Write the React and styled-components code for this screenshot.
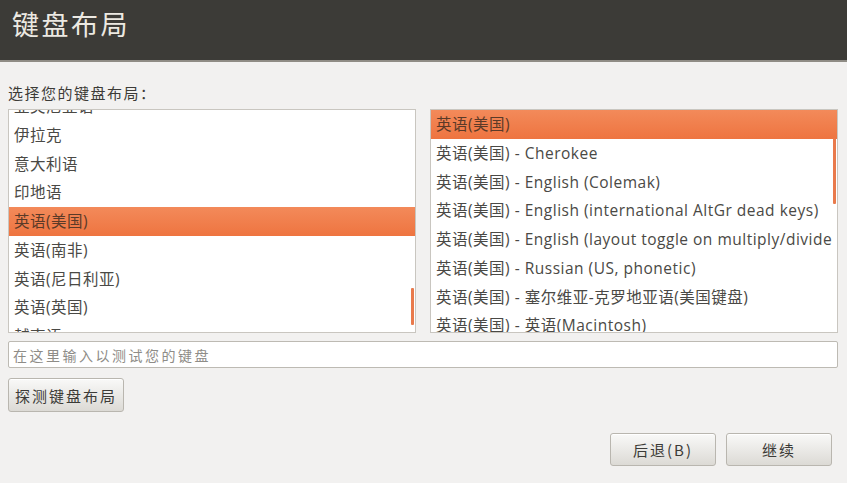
import { useLayoutEffect, useRef } from "react";
import styled, { createGlobalStyle } from "styled-components";

const GlobalStyle = createGlobalStyle`
  html, body {
    margin: 0;
    padding: 0;
    background: #f2f1f0;
  }
  body {
    font-family: "Open Sans", "Noto Sans CJK SC", sans-serif;
    color: #3c3b37;
  }
`;

const ROW = 28.75;

const leftItems = [
  "亚美尼亚语",
  "伊拉克",
  "意大利语",
  "印地语",
  "英语(美国)",
  "英语(南非)",
  "英语(尼日利亚)",
  "英语(英国)",
  "越南语",
];

const rightItems = [
  "英语(美国)",
  "英语(美国) - Cherokee",
  "英语(美国) - English (Colemak)",
  "英语(美国) - English (international AltGr dead keys)",
  "英语(美国) - English (layout toggle on multiply/divide key)",
  "英语(美国) - Russian (US, phonetic)",
  "英语(美国) - 塞尔维亚-克罗地亚语(美国键盘)",
  "英语(美国) - 英语(Macintosh)",
  "英语(美国) - 英语(international with dead keys)",
];

const Page = styled.div`
  width: 847px;
  height: 483px;
  display: flex;
  flex-direction: column;
  overflow: hidden;
`;

const Header = styled.header`
  height: 60px;
  background: #3c3b37;
  border-bottom: 2px solid #8f8c85;
  display: flex;
  align-items: center;
  padding: 0 12px;
  box-sizing: content-box;
`;

const Title = styled.h1`
  margin: 0 0 14px;
  font-family: "Noto Sans CJK SC", sans-serif;
  font-weight: 400;
  font-size: 27px;
  letter-spacing: 2.5px;
  color: #ece9e2;
`;

const Body = styled.main`
  display: flex;
  flex-direction: column;
  padding: 0 9px 0 8px;
`;

const Label = styled.div`
  margin: 21px 0 6px;
  height: 20px;
  line-height: 20px;
  font-family: "Noto Sans CJK SC", sans-serif;
  font-size: 15px;
  letter-spacing: 1.5px;
  color: #3c3b37;
`;

const Lists = styled.div`
  display: flex;
  gap: 14px;
`;

const ListFrame = styled.div`
  position: relative;
  flex: 1 1 0;
  min-width: 0;
  height: 224px;
  box-sizing: border-box;
  border: 1px solid #c9c6c0;
  background: #fff;
`;

const Scroller = styled.ul`
  list-style: none;
  margin: 0;
  padding: 0;
  height: 100%;
  overflow: hidden;
`;

const Row = styled.li`
  height: ${ROW}px;
  line-height: ${ROW}px;
  padding: 0 6px 0 5px;
  white-space: nowrap;
  overflow: hidden;
  font-family: "Open Sans", "Noto Sans CJK SC", sans-serif;
  font-size: 15.5px;
  letter-spacing: 0.5px;
  color: ${(p) => (p.$selected ? "#5b3a28" : "#4a4945")};
  background: ${(p) =>
    p.$selected ? "linear-gradient(#f38a5a, #ee7440)" : "transparent"};
`;

const Thumb = styled.div`
  position: absolute;
  right: 1px;
  width: 3px;
  border-radius: 1px;
  background: #e97a4c;
`;

const TestInput = styled.input`
  margin-top: 8px;
  height: 27px;
  box-sizing: border-box;
  border: 1px solid #bdbab3;
  border-radius: 2px;
  background: #fff;
  padding: 0 4px;
  font-family: "Noto Sans CJK SC", sans-serif;
  font-size: 14px;
  letter-spacing: 2.5px;
  color: #3c3b37;
  outline: none;
  &::placeholder {
    color: #8e8c87;
  }
`;

const Button = styled.button`
  height: ${(p) => p.$h || 33}px;
  width: ${(p) => p.$w}px;
  padding: 0;
  box-sizing: border-box;
  border: 1px solid #b9b6af;
  border-radius: 3px;
  background: linear-gradient(#f9f9f8, #dcdad5);
  box-shadow: inset 0 1px 0 #fff;
  font-family: "Noto Sans CJK SC", sans-serif;
  font-size: 15px;
  letter-spacing: 2px;
  color: #3c3b37;
`;

const DetectRow = styled.div`
  margin-top: 10px;
`;

const Footer = styled.div`
  margin-top: 21px;
  display: flex;
  justify-content: flex-end;
  gap: 10px;
  padding-right: 6px;
`;

const List = ({ items, selected, offset, thumbTop, thumbHeight }) => {
  const ref = useRef(null);
  useLayoutEffect(() => {
    if (ref.current) ref.current.scrollTop = offset;
  }, [offset]);
  return (
    <ListFrame>
      <Scroller ref={ref}>
        {items.map((item, i) => (
          <Row key={item} $selected={i === selected}>
            {item}
          </Row>
        ))}
      </Scroller>
      <Thumb style={{ top: thumbTop, height: thumbHeight }} />
    </ListFrame>
  );
};

export default function App() {
  return (
    <Page>
      <GlobalStyle />
      <Header>
        <Title>键盘布局</Title>
      </Header>
      <Body>
        <Label>选择您的键盘布局：</Label>
        <Lists>
          <List
            items={leftItems}
            selected={4}
            offset={18}
            thumbTop={178}
            thumbHeight={37}
          />
          <List
            items={rightItems}
            selected={0}
            offset={0}
            thumbTop={28}
            thumbHeight={66}
          />
        </Lists>
        <TestInput placeholder="在这里输入以测试您的键盘" />
        <DetectRow>
          <Button $w={116} $h={34}>探测键盘布局</Button>
        </DetectRow>
        <Footer>
          <Button $w={106} $h={33}>后退(B)</Button>
          <Button $w={106} $h={33}>继续</Button>
        </Footer>
      </Body>
    </Page>
  );
}
